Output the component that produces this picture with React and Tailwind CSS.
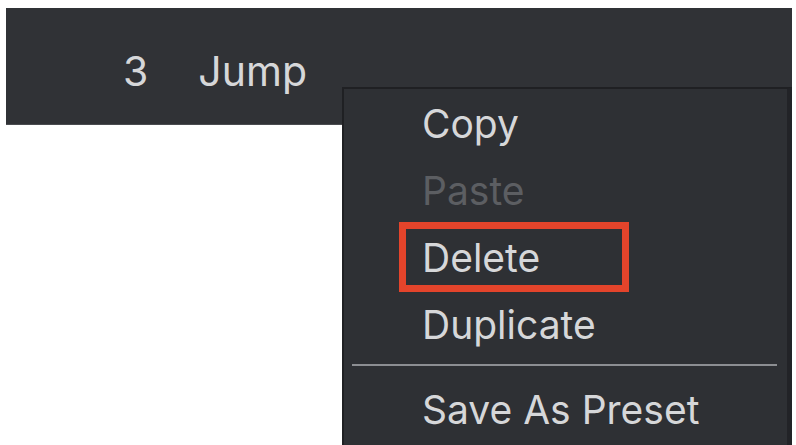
export default function App() {
  const font = { fontFamily: 'Inter, "Noto Sans", sans-serif' };
  return (
    <div className="relative w-[796px] h-[445px] overflow-hidden bg-white" style={font}>
      <div className="ml-[6px] mt-[8px] w-[786px] h-[117px] bg-[#303236] border-b border-[#4a4c50] flex items-start pt-[36px] text-[#d6d7d9] text-[41px] leading-[54px]">
        <span className="ml-[117px]">3</span>
        <span className="ml-[50px]">Jump</span>
      </div>
      <div className="absolute left-[342px] top-[87px] w-[450px] h-[380px] bg-[#2e3034] border-l-2 border-t-2 border-[#1f2023] border-r-[5px] border-r-[#222327] pt-[1px] text-[39px] leading-[67px] text-[#d6d7d9]">
        <div className="pl-[78px] h-[67px]">Copy</div>
        <div className="pl-[78px] h-[67px] text-[#5c5e62]">Paste</div>
        <div className="relative pl-[78px] h-[67px]">
          <div className="absolute left-[55px] top-[-2px] w-[230px] h-[70px] border-[7px] border-[#e4442b]"></div>
          <span className="relative">Delete</span>
        </div>
        <div className="pl-[78px] h-[67px]">Duplicate</div>
        <div className="ml-[8px] mr-[10px] mt-[6px] h-[2px] bg-[#8c8e92]"></div>
        <div className="pl-[78px] h-[67px] mt-[10px]">Save As Preset</div>
      </div>
    </div>
  );
}
